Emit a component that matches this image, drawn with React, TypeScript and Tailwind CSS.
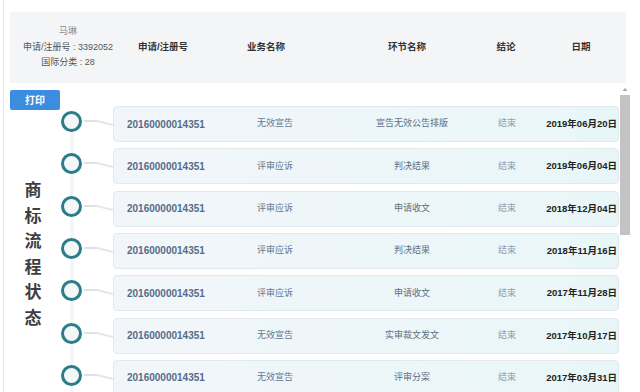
import React from "react";

const rows = [
  ["20160000014351", "无效宣告", "宣告无效公告排版", "结束", "2019年06月20日"],
  ["20160000014351", "评审应诉", "判决结果", "结束", "2019年06月04日"],
  ["20160000014351", "评审应诉", "申请收文", "结束", "2018年12月04日"],
  ["20160000014351", "评审应诉", "判决结果", "结束", "2018年11月16日"],
  ["20160000014351", "评审应诉", "申请收文", "结束", "2017年11月28日"],
  ["20160000014351", "无效宣告", "实审裁文发文", "结束", "2017年10月17日"],
  ["20160000014351", "无效宣告", "评审分案", "结束", "2017年03月31日"],
];

export default function App() {
  return (
    <div className="w-[640px] h-[392px] overflow-hidden bg-white font-['Liberation_Sans','Noto_Sans_CJK_SC',sans-serif]">
      <div className="ml-[3px] h-[392px] border-l border-[#e6e8ea] pl-[6px] pt-[12px]">
        {/* header */}
        <div className="w-[616px] h-[71px] bg-[#f4f5f7] flex items-center">
          <div className="w-[116px] flex flex-col items-center text-[9px] leading-[15.5px] text-[#555]">
            <div className="text-[#8a8a8a]">马琳</div>
            <div>申请/注册号 : 3392052</div>
            <div>国际分类 : 28</div>
          </div>
          <div className="w-[74px] text-center text-[9.5px] font-bold text-[#333]">申请/注册号</div>
          <div className="w-[132px] text-center text-[9.5px] font-bold text-[#333]">业务名称</div>
          <div className="w-[150px] text-center text-[9.5px] font-bold text-[#333]">环节名称</div>
          <div className="w-[48px] text-center text-[9.5px] font-bold text-[#333]">结论</div>
          <div className="w-[95px] pl-[7px] text-center text-[9.5px] font-bold text-[#333]">日期</div>
        </div>
        {/* body */}
        <div className="flex">
          <div className="w-[103px] flex flex-col pt-[7px]">
            <div className="w-[50px] h-[20px] rounded-[2px] bg-[#3c8de0] text-white text-[10px] font-bold flex items-center justify-center">
              打印
            </div>
            <div className="flex">
              <div className="w-[46px] flex flex-col items-center pt-[66px] text-[17px] leading-[25.6px] font-bold text-[#3e3e3e] font-['Noto_Sans_CJK_SC',sans-serif]">
                <span>商</span>
                <span>标</span>
                <span>流</span>
                <span>程</span>
                <span>状</span>
                <span>态</span>
              </div>
              <div className="relative w-[57px] flex flex-col">
                <div className="absolute left-[14px] top-0 bottom-0 w-[4px] bg-[#f4f6f7]" />
                {rows.map((_, i) => (
                  <div key={i} className="relative h-[42.33px] flex items-start">
                    <div className="ml-[5px] mt-[1px] w-[21px] h-[21px] rounded-full border-[3.5px] border-[#2a7d89] bg-[#f3f7f8] z-10" />
                    <svg width="31" height="24" className="mt-[1px]">
                      <line x1="2" y1="10" x2="15" y2="10" stroke="#dde2e5" strokeWidth="2" />
                      <line x1="15" y1="10" x2="31" y2="14" stroke="#e4e8ea" strokeWidth="2" />
                    </svg>
                  </div>
                ))}
              </div>
            </div>
          </div>
          <div className="w-[506px] pt-[23px] flex flex-col gap-[6.33px]">
            {rows.map((r, i) => (
              <div
                key={i}
                className="h-[36px] shrink-0 rounded-[4px] border border-[#e1e9ed] bg-linear-to-r from-[#f2f6fa] to-[#e9f6f8] flex items-center"
              >
                <div className="w-[108px] pl-[13px] text-[10px] font-bold text-[#566c88]">{r[0]}</div>
                <div className="w-[106px] text-center text-[9px] text-[#66778d]">{r[1]}</div>
                <div className="w-[168px] text-center text-[9px] text-[#5d6e84]">{r[2]}</div>
                <div className="w-[22px] text-center text-[9px] text-[#8fa0ad]">{r[3]}</div>
                <div className="flex-1 text-right pr-[1px] text-[9.5px] font-bold text-[#222]">{r[4]}</div>
              </div>
            ))}
          </div>
          <div className="w-[10px] ml-[1px] flex flex-col items-center pt-[4px]">
            <svg width="6" height="5" className="mb-[3px]">
              <path d="M3 1 L5.5 4 L0.5 4 Z" fill="#a9a9a9" />
            </svg>
            <div className="w-[10px] h-[140px] bg-[#c3c3c3]" />
          </div>
        </div>
      </div>
    </div>
  );
}
